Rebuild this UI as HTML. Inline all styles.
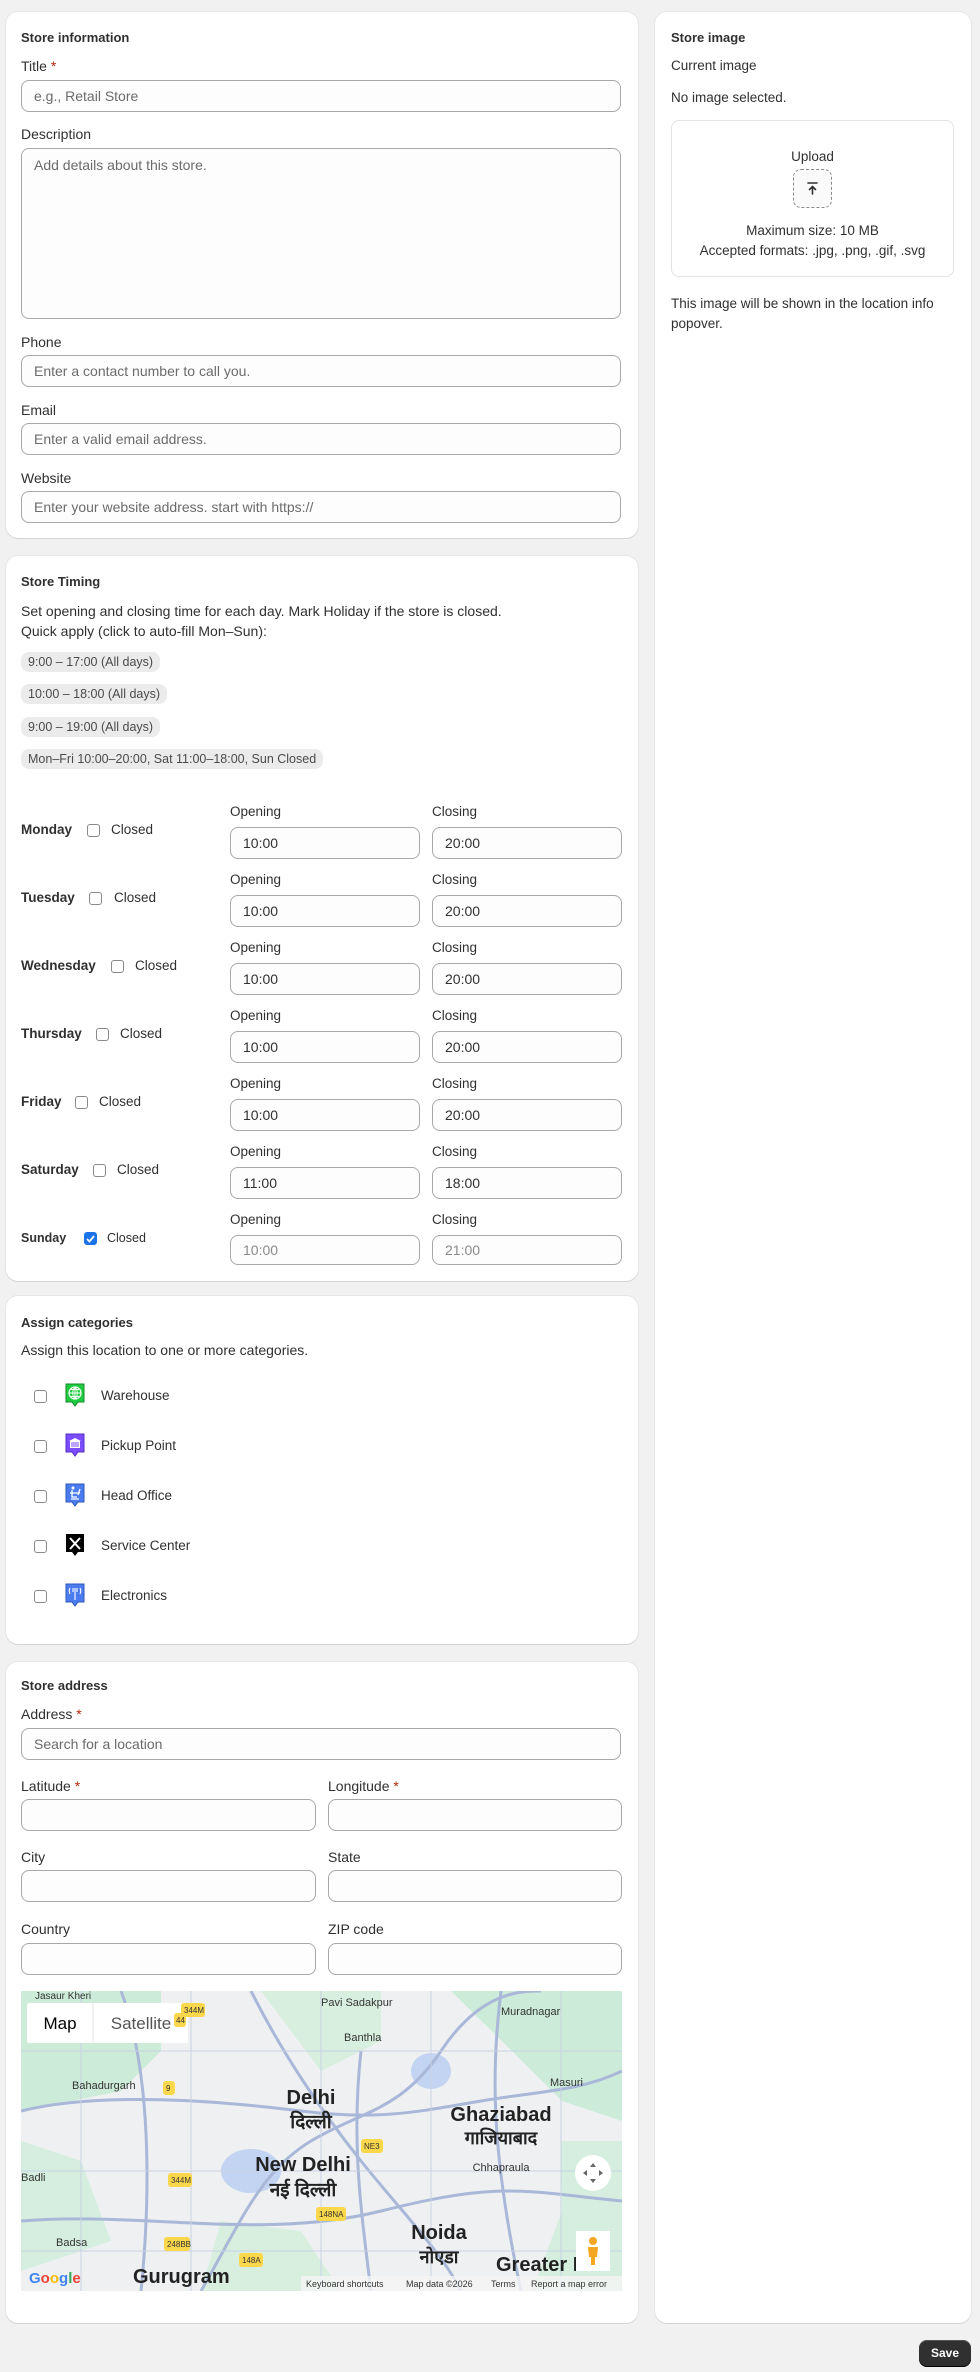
<!DOCTYPE html>
<html><head><meta charset="utf-8"><style>
*{box-sizing:border-box;margin:0;padding:0}
body{width:980px;height:2372px;background:#f1f1f1;font-family:"Liberation Sans","Noto Sans CJK SC",sans-serif;color:#303030;font-size:13.5px;position:relative;overflow:hidden}
.card{position:absolute;background:#fff;border-radius:12px;box-shadow:0 1px 0 #d4d4d4,0 0 0 1px #e6e6e6}
.t{position:absolute;white-space:nowrap;line-height:16px}
.p{font-size:14px}
.h{font-weight:bold;font-size:13px}
.in{position:absolute;background:#fdfdfd;border:1px solid #a8a8a8;border-radius:8px;height:32px;padding-left:12px;line-height:30px;color:#6b6b6b;font-size:14px}
.req{color:#b5260b}
.chip{position:absolute;left:21px;height:20px;line-height:20px;background:#ebebeb;border-radius:8px;padding:0 7px;font-size:12.5px;color:#4a4a4a}
.cb{position:absolute;width:13px;height:13px;border:1px solid #8a8a8a;border-radius:3px;background:#fff}
.day{position:absolute;font-weight:bold}
.v{color:#303030}
.r{font-size:13.5px}
</style></head><body>

<!-- Card 1 -->
<div class="card" style="left:6px;top:12px;width:632px;height:526px"></div>
<div class="t h" style="left:21px;top:30px">Store information</div>
<div class="t p" style="left:21px;top:58px">Title <span class="req">*</span></div>
<div class="in" style="left:21px;top:80px;width:600px">e.g., Retail Store</div>
<div class="t p" style="left:21px;top:126px">Description</div>
<div class="in" style="left:21px;top:148px;width:600px;height:171px;line-height:16px;padding-top:8px">Add details about this store.</div>
<div class="t p" style="left:21px;top:334px">Phone</div>
<div class="in" style="left:21px;top:355px;width:600px">Enter a contact number to call you.</div>
<div class="t p" style="left:21px;top:402px">Email</div>
<div class="in" style="left:21px;top:423px;width:600px">Enter a valid email address.</div>
<div class="t p" style="left:21px;top:470px">Website</div>
<div class="in" style="left:21px;top:491px;width:600px">Enter your website address. start with https://</div>

<!-- Card 2 timing -->
<div class="card" style="left:6px;top:556px;width:632px;height:725px"></div>
<div class="t h" style="left:21px;top:574px">Store Timing</div>
<div class="t p" style="left:21px;top:603px">Set opening and closing time for each day. Mark Holiday if the store is closed.</div>
<div class="t p" style="left:21px;top:623px">Quick apply (click to auto-fill Mon–Sun):</div>
<div class="chip" style="top:652px">9:00 – 17:00 (All days)</div>
<div class="chip" style="top:684px">10:00 – 18:00 (All days)</div>
<div class="chip" style="top:717px">9:00 – 19:00 (All days)</div>
<div class="chip" style="top:749px">Mon–Fri 10:00–20:00, Sat 11:00–18:00, Sun Closed</div>

<div class="day t" style="left:21px;top:822px">Monday</div><div class="cb" style="left:87px;top:824px"></div><div class="t" style="left:111px;top:822px">Closed</div>
<div class="t" style="left:230px;top:804px">Opening</div><div class="t" style="left:432px;top:804px">Closing</div>
<div class="in v" style="left:230px;top:827px;width:190px">10:00</div><div class="in v" style="left:432px;top:827px;width:190px">20:00</div>

<div class="day t" style="left:21px;top:890px">Tuesday</div><div class="cb" style="left:89px;top:892px"></div><div class="t" style="left:114px;top:890px">Closed</div>
<div class="t" style="left:230px;top:872px">Opening</div><div class="t" style="left:432px;top:872px">Closing</div>
<div class="in v" style="left:230px;top:895px;width:190px">10:00</div><div class="in v" style="left:432px;top:895px;width:190px">20:00</div>

<div class="day t" style="left:21px;top:958px">Wednesday</div><div class="cb" style="left:111px;top:960px"></div><div class="t" style="left:135px;top:958px">Closed</div>
<div class="t" style="left:230px;top:940px">Opening</div><div class="t" style="left:432px;top:940px">Closing</div>
<div class="in v" style="left:230px;top:963px;width:190px">10:00</div><div class="in v" style="left:432px;top:963px;width:190px">20:00</div>

<div class="day t" style="left:21px;top:1026px">Thursday</div><div class="cb" style="left:96px;top:1028px"></div><div class="t" style="left:120px;top:1026px">Closed</div>
<div class="t" style="left:230px;top:1008px">Opening</div><div class="t" style="left:432px;top:1008px">Closing</div>
<div class="in v" style="left:230px;top:1031px;width:190px">10:00</div><div class="in v" style="left:432px;top:1031px;width:190px">20:00</div>

<div class="day t" style="left:21px;top:1094px">Friday</div><div class="cb" style="left:75px;top:1096px"></div><div class="t" style="left:99px;top:1094px">Closed</div>
<div class="t" style="left:230px;top:1076px">Opening</div><div class="t" style="left:432px;top:1076px">Closing</div>
<div class="in v" style="left:230px;top:1099px;width:190px">10:00</div><div class="in v" style="left:432px;top:1099px;width:190px">20:00</div>

<div class="day t" style="left:21px;top:1162px">Saturday</div><div class="cb" style="left:93px;top:1164px"></div><div class="t" style="left:117px;top:1162px">Closed</div>
<div class="t" style="left:230px;top:1144px">Opening</div><div class="t" style="left:432px;top:1144px">Closing</div>
<div class="in v" style="left:230px;top:1167px;width:190px">11:00</div><div class="in v" style="left:432px;top:1167px;width:190px">18:00</div>

<div class="day t" style="left:21px;top:1230px;font-size:12.5px">Sunday</div>
<div class="cb" style="left:84px;top:1232px;background:#1a73e8;border-color:#1a73e8"><svg width="11" height="11" viewBox="0 0 11 11" style="position:absolute;left:0;top:0"><path d="M2 6l2.5 2.5L9 3" stroke="#fff" stroke-width="1.8" fill="none"/></svg></div>
<div class="t" style="left:107px;top:1230px;font-size:12.5px">Closed</div>
<div class="t" style="left:230px;top:1212px">Opening</div><div class="t" style="left:432px;top:1212px">Closing</div>
<div class="in" style="left:230px;top:1235px;width:190px;height:30px;line-height:28px;color:#8a8a8a">10:00</div><div class="in" style="left:432px;top:1235px;width:190px;height:30px;line-height:28px;color:#8a8a8a">21:00</div>

<!-- Card 3 categories -->
<div class="card" style="left:6px;top:1296px;width:632px;height:348px"></div>
<div class="t h" style="left:21px;top:1315px">Assign categories</div>
<div class="t p" style="left:21px;top:1342px">Assign this location to one or more categories.</div>

<div class="cb" style="left:34px;top:1390px"></div>
<svg style="position:absolute;left:64px;top:1383px" width="22" height="25" viewBox="0 0 22 25"><path d="M2 1h18v18h-6l-3 4-3-4H2z" fill="#1fcc3f" stroke="#138a2a"/><circle cx="11" cy="10" r="6" fill="none" stroke="#fff" stroke-width="1.2"/><path d="M5 10h12M11 4v12M7 6.5h8M7 13.5h8M11 4c-3 3-3 9 0 12M11 4c3 3 3 9 0 12" stroke="#fff" stroke-width=".9" fill="none"/></svg>
<div class="t" style="left:101px;top:1388px">Warehouse</div>

<div class="cb" style="left:34px;top:1440px"></div>
<svg style="position:absolute;left:64px;top:1433px" width="22" height="25" viewBox="0 0 22 25"><path d="M2 1h18v18h-6l-3 4-3-4H2z" fill="#7c4dff" stroke="#5530c0"/><path d="M5 8l6-3 6 3zM6 8h10v7H6z" fill="#fff"/><path d="M8 9v5M10 9v5M12 9v5M14 9v5" stroke="#7c4dff"/></svg>
<div class="t" style="left:101px;top:1438px">Pickup Point</div>

<div class="cb" style="left:34px;top:1490px"></div>
<svg style="position:absolute;left:64px;top:1483px" width="22" height="25" viewBox="0 0 22 25"><path d="M2 1h18v18h-6l-3 4-3-4H2z" fill="#4a7cf0" stroke="#2f57b8"/><circle cx="9" cy="5" r="1.5" fill="#fff"/><path d="M8 7v7h5M6 10h10M7 16h8M16 6l-2 6" stroke="#fff" stroke-width="1.3" fill="none"/></svg>
<div class="t" style="left:101px;top:1488px">Head Office</div>

<div class="cb" style="left:34px;top:1540px"></div>
<svg style="position:absolute;left:64px;top:1533px" width="22" height="25" viewBox="0 0 22 25"><path d="M2 1h18v18h-6l-3 4-3-4H2z" fill="#000"/><path d="M6 5l10 11M16 5L6 16" stroke="#fff" stroke-width="2"/></svg>
<div class="t" style="left:101px;top:1538px">Service Center</div>

<div class="cb" style="left:34px;top:1590px"></div>
<svg style="position:absolute;left:64px;top:1583px" width="22" height="25" viewBox="0 0 22 25"><path d="M2 1h18v18h-6l-3 4-3-4H2z" fill="#4a7cf0" stroke="#2f57b8"/><path d="M11 5v12M9 5v4M13 5v4M6 5c-1 2-1 4 0 6M16 5c1 2 1 4 0 6" stroke="#fff" stroke-width="1.1" fill="none"/></svg>
<div class="t" style="left:101px;top:1588px">Electronics</div>

<!-- Card 4 address -->
<div class="card" style="left:6px;top:1662px;width:632px;height:661px"></div>
<div class="t h" style="left:21px;top:1678px">Store address</div>
<div class="t p" style="left:21px;top:1706px">Address <span class="req">*</span></div>
<div class="in" style="left:21px;top:1728px;width:600px">Search for a location</div>
<div class="t p" style="left:21px;top:1778px">Latitude <span class="req">*</span></div>
<div class="t p" style="left:328px;top:1778px">Longitude <span class="req">*</span></div>
<div class="in" style="left:21px;top:1799px;width:295px"></div>
<div class="in" style="left:328px;top:1799px;width:294px"></div>
<div class="t p" style="left:21px;top:1849px">City</div>
<div class="t p" style="left:328px;top:1849px">State</div>
<div class="in" style="left:21px;top:1870px;width:295px"></div>
<div class="in" style="left:328px;top:1870px;width:294px"></div>
<div class="t p" style="left:21px;top:1921px">Country</div>
<div class="t p" style="left:328px;top:1921px">ZIP code</div>
<div class="in" style="left:21px;top:1943px;width:295px"></div>
<div class="in" style="left:328px;top:1943px;width:294px"></div>

<!-- Map -->
<svg style="position:absolute;left:21px;top:1991px;overflow:hidden" width="601" height="300" viewBox="0 0 601 300" font-family="Liberation Sans, Noto Sans CJK SC, sans-serif">
<rect width="601" height="300" fill="#eef0f2"/>
<path d="M0 0h140v60l-40 40L0 120z" fill="#cdebd9"/>
<path d="M0 150l60 20 30 80-90 30z" fill="#d5eedf"/>
<path d="M430 0h171v130l-60-20-50-50z" fill="#cdebd9"/>
<path d="M540 150h61v150h-90l30-80z" fill="#d5eedf"/>
<path d="M240 0h120v50l-60 30z" fill="#d8efe0"/>
<path d="M200 230l80 10 40 60H180z" fill="#d8efe0"/>
<ellipse cx="230" cy="180" rx="30" ry="22" fill="#c3d4f2"/>
<ellipse cx="410" cy="80" rx="20" ry="18" fill="#c3d4f2"/>
<g stroke="#a9b8d8" stroke-width="3" fill="none">
<path d="M0 120C80 100 200 110 280 120S400 120 460 110 560 100 601 80"/>
<path d="M100 0C130 80 130 200 120 300"/>
<path d="M230 0C260 60 300 120 340 170S420 260 440 300"/>
<path d="M350 300C340 220 330 150 340 60"/>
<path d="M0 230C120 220 240 250 360 220S500 200 601 210"/>
<path d="M180 300C220 230 240 180 290 150S380 120 420 60 500 0 520 0"/>
<path d="M480 0C470 80 470 160 500 300"/>
</g>
<g stroke="#c9d2e3" stroke-width="1" fill="none">
<path d="M0 60h601M0 180h601M0 260h601M60 0v300M170 0v300M300 0v300M410 0v300M540 0v300"/>
</g>
<rect x="6" y="12" width="161" height="40" fill="#fff" rx="2"/>
<line x1="72" y1="12" x2="72" y2="52" stroke="#e5e5e5"/>
<text x="39" y="38" font-size="17" text-anchor="middle" fill="#000" font-weight="500">Map</text>
<text x="120" y="38" font-size="17" text-anchor="middle" fill="#555">Satellite</text>
<text x="14" y="8" font-size="10" fill="#333">Jasaur Kheri</text>
<text x="51" y="98" font-size="11" fill="#333">Bahadurgarh</text>
<text x="300" y="15" font-size="11" fill="#333">Pavi Sadakpur</text>
<text x="323" y="50" font-size="11" fill="#333">Banthla</text>
<text x="480" y="24" font-size="11" fill="#333">Muradnagar</text>
<text x="529" y="95" font-size="11" fill="#333">Masuri</text>
<text x="290" y="113" font-size="20" text-anchor="middle" fill="#222" font-weight="bold">Delhi</text>
<text x="290" y="137" font-size="19" text-anchor="middle" fill="#222" font-weight="bold">दिल्ली</text>
<text x="282" y="180" font-size="20" text-anchor="middle" fill="#222" font-weight="bold">New Delhi</text>
<text x="282" y="205" font-size="19" text-anchor="middle" fill="#222" font-weight="bold">नई दिल्ली</text>
<text x="480" y="130" font-size="20" text-anchor="middle" fill="#222" font-weight="bold">Ghaziabad</text>
<text x="480" y="153" font-size="18" text-anchor="middle" fill="#222" font-weight="bold">गाजियाबाद</text>
<text x="480" y="180" font-size="11" text-anchor="middle" fill="#333">Chhapraula</text>
<text x="418" y="248" font-size="20" text-anchor="middle" fill="#222" font-weight="bold">Noida</text>
<text x="418" y="272" font-size="18" text-anchor="middle" fill="#222" font-weight="bold">नोएडा</text>
<text x="475" y="280" font-size="20" fill="#222" font-weight="bold">Greater No</text>
<text x="35" y="255" font-size="11" fill="#333">Badsa</text>
<text x="112" y="292" font-size="20" fill="#222" font-weight="bold">Gurugram</text>
<text x="0" y="190" font-size="11" fill="#333">Badli</text>
<g font-size="8" fill="#333"><rect x="160" y="12" width="24" height="14" rx="3" fill="#fbd74b"/><text x="163" y="22">344M</text>
<rect x="153" y="22" width="12" height="14" rx="3" fill="#fbd74b"/><text x="155" y="32">44</text>
<rect x="142" y="90" width="12" height="14" rx="3" fill="#fbd74b"/><text x="145" y="100">9</text>
<rect x="147" y="182" width="24" height="14" rx="3" fill="#fbd74b"/><text x="150" y="192">344M</text>
<rect x="340" y="148" width="22" height="14" rx="3" fill="#fbd74b"/><text x="343" y="158">NE3</text>
<rect x="295" y="216" width="30" height="14" rx="3" fill="#fbd74b"/><text x="298" y="226">148NA</text>
<rect x="143" y="246" width="26" height="14" rx="3" fill="#fbd74b"/><text x="146" y="256">248BB</text>
<rect x="218" y="262" width="24" height="14" rx="3" fill="#fbd74b"/><text x="221" y="272">148A</text></g>
<circle cx="572" cy="182" r="18" fill="#fff"/>
<path d="M572 172l-3 4h6zM572 192l-3-4h6zM562 182l4-3v6zM582 182l-4-3v6z" fill="#666"/>
<rect x="555" y="240" width="34" height="40" fill="#fff"/>
<circle cx="572" cy="250" r="4" fill="#f5a623"/><path d="M567 256h10l-1 10h-2v8h-4v-8h-2z" fill="#f5a623"/>
<text x="8" y="292" font-size="15" font-weight="bold" fill="#4285f4">G<tspan fill="#ea4335">o</tspan><tspan fill="#fbbc05">o</tspan><tspan fill="#4285f4">g</tspan><tspan fill="#34a853">l</tspan><tspan fill="#ea4335">e</tspan></text>
<rect x="280" y="285" width="321" height="15" fill="#f5f5f5" opacity=".8"/>
<text x="285" y="296" font-size="9" fill="#333">Keyboard shortcuts</text>
<text x="385" y="296" font-size="9" fill="#333">Map data ©2026</text>
<text x="470" y="296" font-size="9" fill="#333">Terms</text>
<text x="510" y="296" font-size="9" fill="#333">Report a map error</text>
</svg>

<!-- Right card -->
<div class="card" style="left:655px;top:12px;width:316px;height:2311px"></div>
<div class="t h" style="left:671px;top:30px">Store image</div>
<div class="t r" style="left:671px;top:58px">Current image</div>
<div class="t r" style="left:671px;top:90px">No image selected.</div>
<div style="position:absolute;left:671px;top:120px;width:283px;height:157px;border:1px solid #e3e3e3;border-radius:8px"></div>
<div class="t r" style="left:671px;top:149px;width:283px;text-align:center">Upload</div>
<div style="position:absolute;left:793px;top:169px;width:39px;height:39px;border:1px dashed #8a8a8a;border-radius:8px;background:#fafafa"></div>
<svg style="position:absolute;left:804px;top:180px" width="17" height="17" viewBox="0 0 17 17"><path d="M4 3h9M8.5 14V6.5M5.5 9.5l3-3 3 3" stroke="#303030" stroke-width="1.6" fill="none" stroke-linecap="round"/></svg>
<div class="t r" style="left:671px;top:223px;width:283px;text-align:center">Maximum size: 10 MB</div>
<div class="t r" style="left:671px;top:243px;width:283px;text-align:center">Accepted formats: .jpg, .png, .gif, .svg</div>
<div class="t r" style="left:671px;top:296px">This image will be shown in the location info</div>
<div class="t r" style="left:671px;top:316px">popover.</div>

<div style="position:absolute;left:919px;top:2340px;width:52px;height:27px;background:#303030;border-radius:8px;color:#fff;font-weight:bold;font-size:12px;text-align:center;line-height:27px;box-shadow:inset 0 -1px 0 #000,inset 0 1px 0 #555">Save</div>
</body></html>
